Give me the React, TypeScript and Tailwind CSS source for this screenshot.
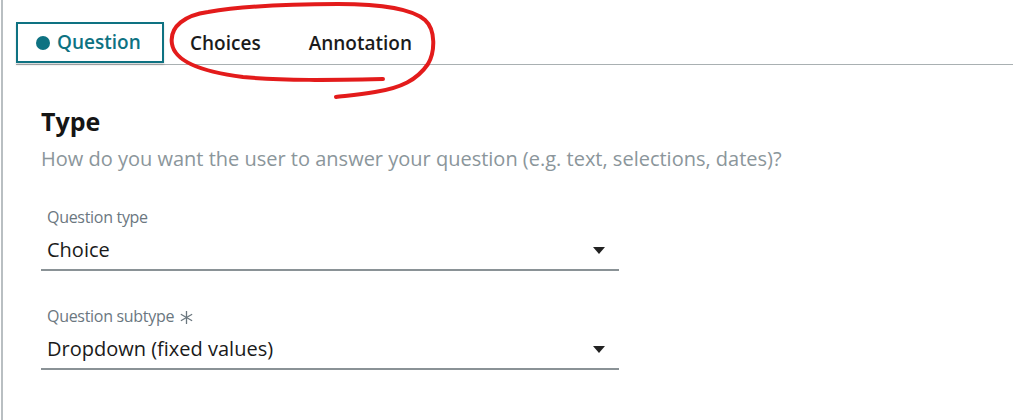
import { useState } from "react"

const tabs = ["Question", "Choices", "Annotation"]

function SelectField({ label, value, required }: { label: string; value: string; required?: boolean }) {
  return (
    <div className="w-[578px]">
      <div className="text-[16px] tracking-[-0.3px] text-[#6b777f] leading-5 pl-[6px] flex items-center gap-[6px]">
        {label}
        {required && (
          <svg width="13" height="13" viewBox="0 0 13 13" className="mt-[2px]">
            <g stroke="#6b777f" strokeWidth="1.3" strokeLinecap="round">
              <path d="M6.5 0.5v12" />
              <path d="M1.3 3.5l10.4 6" />
              <path d="M1.3 9.5l10.4-6" />
            </g>
          </svg>
        )}
      </div>
      <div className="flex items-center justify-between border-b-2 border-[#8a9296] h-[44px] pt-[4px] pl-[6px] pr-[14px]">
        <span className="text-[20px] text-[#1a1a1a]">{value}</span>
        <svg width="12" height="7" viewBox="0 0 12 7">
          <path d="M0 0h12L6 7z" fill="#222" />
        </svg>
      </div>
    </div>
  )
}

export default function App() {
  const [active, setActive] = useState("Question")
  return (
    <div className="min-h-screen bg-white" style={{ fontFamily: "'Open Sans', sans-serif" }}>
      <div className="relative ml-[1px] border-l-2 border-[#b9bfc2] h-[420px]">
        {/* tabs */}
        <div className="pt-[22px] pl-[13px]">
          <div className="flex items-end border-b border-[#a9b0b2]">
            {tabs.map((t) =>
              t === active ? (
                <button
                  key={t}
                  onClick={() => setActive(t)}
                  className="flex items-center gap-[7px] h-[41px] w-[148px] px-[18px] border-2 border-[#0e7282] text-[#0e7282] text-[19px] font-semibold shadow-[0_2px_2px_rgba(0,0,0,0.15)] mb-[1px]"
                >
                  <span className="w-[14px] h-[14px] rounded-full bg-[#0e7282]" />
                  {t}
                </button>
              ) : (
                <button
                  key={t}
                  onClick={() => setActive(t)}
                  className="h-[42px] pl-[26px] pr-[22px] text-[19px] font-semibold text-[#1b1b1b]"
                >
                  {t}
                </button>
              )
            )}
          </div>
        </div>

        {/* annotation scribble */}
        <svg className="absolute left-0 top-0 pointer-events-none" width="460" height="110">
          <path
            d="M380 79 C330 80 280 81 240 77 C200 72 172 62 169 44 C166 26 183 15 205 12 C240 6 290 4 335 4 C372 4 408 8 422 20 C433 30 432 52 425 64 C414 80 398 88 372 92 C355 95 340 96 333 97"
            fill="none"
            stroke="#e31b1b"
            strokeWidth="4"
            strokeLinecap="round"
          />
        </svg>

        {/* content */}
        <div className="pl-[38px] pt-[40px]">
          <h2 className="text-[25px] font-bold text-[#151515] leading-8">Type</h2>
          <p className="mt-[8px] text-[20px] text-[#8b969b] leading-7">
            How do you want the user to answer your question (e.g. text, selections, dates)?
          </p>
          <div className="mt-[34px] flex flex-col gap-[35px]">
            <SelectField label="Question type" value="Choice" />
            <SelectField label="Question subtype" value="Dropdown (fixed values)" required />
          </div>
        </div>
      </div>
    </div>
  )
}
